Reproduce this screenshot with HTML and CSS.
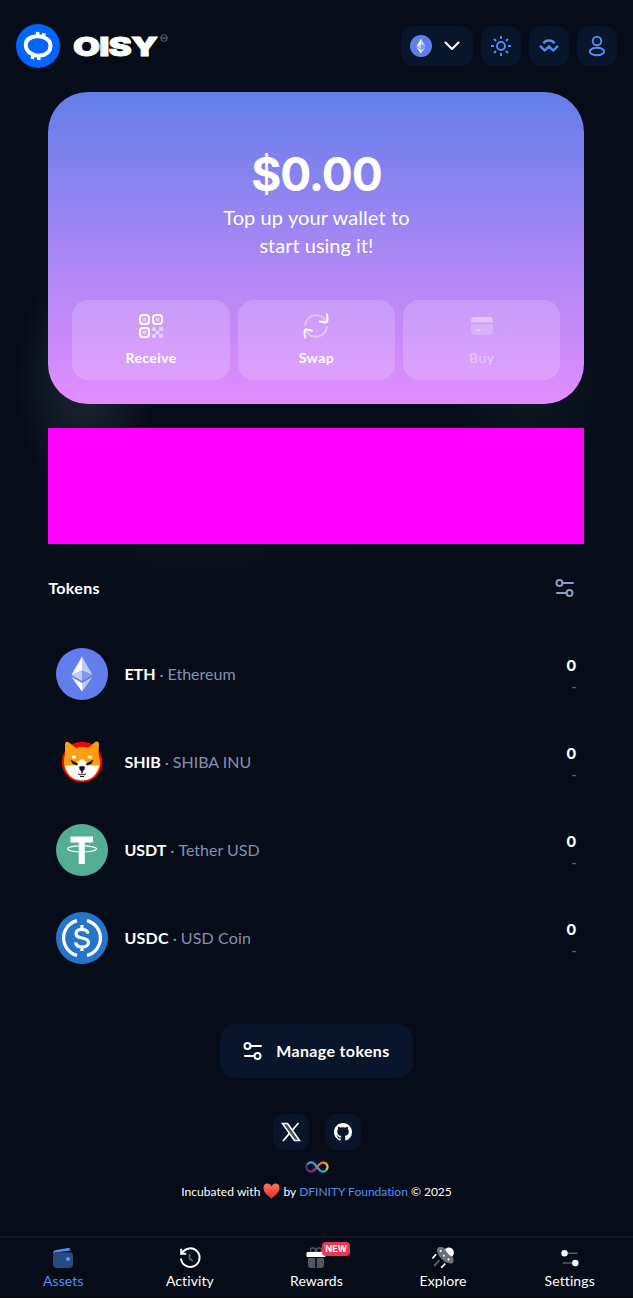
FILE: index.html
```html
<!DOCTYPE html>
<html lang="en">
<head>
<meta charset="utf-8">
<title>OISY Wallet</title>
<link rel="stylesheet" href="styles.css">
</head>
<body>
<svg class="defs" width="0" height="0">
  <defs>
    <symbol id="eth" viewBox="0 0 52 52">
      <circle cx="26" cy="26" r="26" fill="#627eea"/>
      <path d="M26 8.500V22.500L36.500 27Z" fill="#c0cbf7"/>
      <path d="M26 8.500 15.500 27 26 22.500Z" fill="#fff"/>
      <path d="M26 22.500 15.500 27 26 33Z" fill="#c0cbf7"/>
      <path d="M26 22.500 36.500 27 26 33Z" fill="#8198ee"/>
      <path d="M15.500 29 26 35V43.500Z" fill="#fff"/>
      <path d="M36.500 29 26 35V43.500Z" fill="#c0cbf7"/>
    </symbol>
    <symbol id="sliders" viewBox="0 0 20 20">
      <g fill="none" stroke="currentColor" stroke-width="2">
        <circle cx="4.500" cy="5" r="3"/><path d="M7.500 5H18" stroke-linecap="round"/>
        <circle cx="14.500" cy="15" r="3"/><path d="M2 15H11.500" stroke-linecap="round"/>
      </g>
    </symbol>
  </defs>
</svg>
<div class="page">
  <header class="header">
    <div class="brand">
      <svg width="44" height="44" viewBox="0 0 44 44">
        <circle cx="22" cy="22" r="22" fill="#0066ff"/>
        <path d="M20.500 12.300C27 11.500 34.500 15.500 34.500 21.500 34.500 28 29.500 31.300 23.500 31.600 16.500 32 9.800 27.500 9.800 21 9.800 15.500 14 13 20.500 12.300Z" fill="none" stroke="#fff" stroke-width="4"/>
        <path d="M21.800 8 21.300 12M28.200 9.200 27 13.500M17.300 30.500 16.200 35M23 31.500 22.600 36" stroke="#fff" stroke-width="3.600"/>
      </svg>
      <span class="wordmark"><span class="wordmark-text">OISY</span></span>
      <svg class="mark" width="8" height="8" viewBox="0 0 8 8" fill="none" stroke="#8a909b" stroke-width=".6"><circle cx="4" cy="4" r="3.400"/><path d="M4 4C2 2 1.500 3 1.500 4S2 6 4 4 6.500 3 6.500 4 6 6 4 4Z"/></svg>
    </div>
    <div class="tools">
      <button class="tool network">
        <svg width="22" height="22"><use href="#eth"/></svg>
        <svg width="16" height="10" viewBox="0 0 16 10" fill="none" stroke="#fff" stroke-width="2" stroke-linecap="round" stroke-linejoin="round"><path d="M1.500 1.500 8 8 14.500 1.500"/></svg>
      </button>
      <button class="tool">
        <svg width="22" height="22" viewBox="0 0 22 22" fill="none" stroke="#4f8ff5" stroke-width="1.900"><circle cx="11" cy="11" r="4"/><path d="M11 1V4M11 18V21M1 11H4M18 11H21M4 4 6 6M16 16 18 18M18 4 16 6M6 16 4 18"/></svg>
      </button>
      <button class="tool">
        <svg width="22" height="22" viewBox="0 0 22 22" fill="none" stroke="#4f8ff5" stroke-width="2.400" stroke-linejoin="round"><path d="M5.300 8.300C8.500 4.500 13.500 4.500 16.700 8.300M2 10.800 6.700 15.500 11 11.300 15.300 15.500 20 10.800"/></svg>
      </button>
      <button class="tool">
        <svg width="22" height="22" viewBox="0 0 22 22" fill="none" stroke="#4f8ff5" stroke-width="1.900"><circle cx="11" cy="6" r="4.300"/><ellipse cx="11" cy="16.500" rx="7.200" ry="3.800"/></svg>
      </button>
    </div>
  </header>

  <main class="main">
    <section class="hero">
      <div class="balance">$0.00</div>
      <p class="hint"><span class="hint-one">Top up your wallet to</span><br><span>start using it!</span></p>
      <div class="actions">
        <button class="action">
          <svg width="26" height="26" viewBox="0 0 26 26">
            <g fill="none" stroke="#fff" stroke-width="2"><rect x="2" y="2" width="9" height="9" rx="3"/><rect x="15" y="2" width="9" height="9" rx="3"/><rect x="2" y="15" width="9" height="9" rx="3"/></g>
            <g fill="#fff" opacity=".5"><rect x="4.500" y="4.500" width="4" height="4" rx="1"/><rect x="17.500" y="4.500" width="4" height="4" rx="1"/><rect x="4.500" y="17.500" width="4" height="4" rx="1"/><rect x="14" y="14" width="4" height="4" rx="1"/><rect x="21" y="14" width="4" height="4" rx="1"/><rect x="17.500" y="17.500" width="4" height="4" rx="1"/><rect x="14" y="21" width="4" height="4" rx="1"/><rect x="21" y="21" width="4" height="4" rx="1"/></g>
          </svg>
          <span class="receive">Receive</span>
        </button>
        <button class="action">
          <svg width="26" height="26" viewBox="0 0 26 26" fill="none" stroke="#fff" stroke-width="2" stroke-linecap="round" stroke-linejoin="round">
            <g opacity=".4"><path d="M2.200 12A11 11 0 0 1 22.500 7.500"/><path d="M23.800 14A11 11 0 0 1 4 19"/></g>
            <path d="M24 1.500 24.500 6.500C24.500 8.500 23.500 9.500 22 9.400L17 8.500M2 24.500 1.500 19.500C1.500 17 2.500 16.300 4 16.500L9 17.800"/>
          </svg>
          <span class="swap">Swap</span>
        </button>
        <button class="action off">
          <svg width="26" height="26" viewBox="0 0 26 26"><path d="M2 9.500V8Q2 4 6 4H20Q24 4 24 8V9.500Z" fill="#fff" opacity=".42"/><path d="M2 11H24V18Q24 22 20 22H6Q2 22 2 18Z" fill="#fff" opacity=".2"/><path d="M7 17H11.500" stroke="#fff" stroke-opacity=".5" stroke-width="1.500"/></svg>
          <span class="buy">Buy</span>
        </button>
      </div>
    </section>

    <div class="banner"></div>

    <div class="list-head">
      <h2>Tokens</h2>
      <svg class="filter" width="20" height="20"><use href="#sliders"/></svg>
    </div>

    <div class="row">
      <svg width="52" height="52"><use href="#eth"/></svg>
      <div class="name"><b>ETH</b><i>·</i><span>Ethereum</span></div>
      <div class="amount"><b>0</b><span class="dash">-</span></div>
    </div>
    <div class="row">
      <svg width="52" height="52" viewBox="0 0 52 52">
        <circle cx="26" cy="26" r="20.300" fill="#f00500"/>
        <path d="M9 18 9 8.500C9 5.500 11 5 13 6.500L20 12Q26 9.500 32 12L38.500 6.500C41 4.800 43 5.500 43 8.500L42.500 18C45 27 44.500 30 43 33 39 42 33 44 26 44S13 42 9 33C7.500 29 7.500 24 9 18Z" fill="#ff9f0f"/>
        <path d="M9 30C13 28.500 18 31 20.500 28 22 25 24 23.500 26 23.500S30 25 31.500 28C34 31 39 28.500 43 30 41 38.500 35 44.500 26 44.500S11 38.500 9 30Z" fill="#fff"/>
        <ellipse cx="18" cy="21" rx="2.300" ry="1.500" fill="#fff"/><ellipse cx="34" cy="21" rx="2.300" ry="1.500" fill="#fff"/>
        <path d="M15 24 22 28 20.500 29.200 16.500 27.500ZM37 24 30 28 31.500 29.200 35.500 27.500ZM23.300 31Q26 29.500 28.700 31 28.700 34 26.500 35V37H25.500V35Q23.300 34 23.300 31Z" fill="#161616" stroke="#161616" stroke-width=".5"/>
        <path d="M22 37.500 24 39 26 38 28 39 30 37.500M24 40.500H28" stroke="#161616" fill="none"/>
      </svg>
      <div class="name"><b>SHIB</b><i>·</i><span>SHIBA INU</span></div>
      <div class="amount"><b>0</b><span class="dash">-</span></div>
    </div>
    <div class="row">
      <svg width="52" height="52" viewBox="0 0 52 52"><circle cx="26" cy="26" r="26" fill="#53ae94"/><path d="M14.500 12.500H37V18.500H28.800V40H22.700V18.500H14.500Z" fill="#fff"/><path d="M22.500 21.800C15 22.300 11.500 23.300 11.500 24.800S17.500 28 26 28 40.500 26.300 40.500 24.800 36 22.300 29 21.800" fill="none" stroke="#fff" stroke-width="1.200"/></svg>
      <div class="name"><b>USDT</b><i>·</i><span>Tether USD</span></div>
      <div class="amount"><b>0</b><span class="dash">-</span></div>
    </div>
    <div class="row">
      <svg width="52" height="52" viewBox="0 0 52 52"><circle cx="26" cy="26" r="26" fill="#2775ca"/><g fill="none" stroke="#fff" stroke-width="3.200"><path d="M21 8.600A18 18 0 0 0 21 43.400M31 8.600A18 18 0 0 1 31 43.400"/><path d="M32 21.500C31.500 18 29 17.500 26 17.500 22.500 17.500 20 19 20 21.500 20 24.500 22 25.300 26 26S32.500 27.500 32.500 30.800C32.500 33.500 29.500 35 26 35 22.500 35 20 33.800 19.500 30.500M26 13V17.500M26 35V39"/></g></svg>
      <div class="name"><b class="usdc">USDC</b><i>·</i><span class="coin">USD Coin</span></div>
      <div class="amount"><b>0</b><span class="dash">-</span></div>
    </div>

    <button class="manage"><svg width="20" height="20"><use href="#sliders"/></svg><span>Manage tokens</span></button>
  </main>

  <footer class="footer">
    <div class="socials">
      <a class="social"><svg width="20" height="20" viewBox="0 0 20 20"><path d="M1.500 1.500H6.500L18.500 18.500H13.500Z" fill="none" stroke="#fff" stroke-width="1.600"/><path d="M3 1.500H6L17 18.500H14Z" fill="#fff" opacity=".25"/><path d="M17.500 1 11 8.500M8.700 11.200 2 19" stroke="#fff" stroke-width="1.800"/></svg></a>
      <a class="social"><svg width="18" height="18" viewBox="0 0 16 16" fill="#fff"><path d="M8 0C3.580 0 0 3.580 0 8c0 3.540 2.290 6.530 5.470 7.590.4.070.55-.17.55-.38 0-.19-.01-.82-.01-1.490-2.010.37-2.530-.49-2.690-.94-.09-.23-.48-.94-.82-1.130-.28-.15-.68-.52-.01-.53.63-.01 1.080.58 1.230.82.72 1.210 1.870.87 2.330.66.07-.52.28-.87.51-1.070-1.780-.2-3.640-.89-3.640-3.950 0-.87.31-1.590.82-2.150-.08-.2-.36-1.020.08-2.120 0 0 .67-.21 2.200.82.64-.18 1.320-.27 2-.27s1.360.09 2 .27c1.530-1.040 2.200-.82 2.200-.82.44 1.100.16 1.920.08 2.120.51.56.82 1.270.82 2.150 0 3.070-1.870 3.750-3.650 3.950.29.25.54.73.54 1.480 0 1.070-.01 1.930-.01 2.200 0 .21.15.46.55.38A8 8 0 0 0 16 8c0-4.420-3.580-8-8-8Z"/></svg></a>
    </div>
    <svg class="infinity" width="24" height="12" viewBox="0 0 24 12" fill="none" stroke-width="2.200" stroke-linecap="round">
      <defs><linearGradient id="ia"><stop stop-color="#522785"/><stop offset="1" stop-color="#ed1e79"/></linearGradient><linearGradient id="ib"><stop stop-color="#f15a24"/><stop offset="1" stop-color="#fbb03b"/></linearGradient></defs>
      <path d="M12 6C10 8.500 8.500 10.500 6 10.500A4.500 4.500 0 0 1 2.200 3.500" stroke="url(#ia)"/>
      <path d="M12 6C14 3.500 15.500 1.500 18 1.500A4.500 4.500 0 0 1 21.500 8.800" stroke="url(#ib)"/>
      <path d="M3 2.700C5 .8 7.800 1.200 9.500 3L14.500 9C16.500 11 19 11 20.800 9.500" stroke="#29abe2"/>
    </svg>
    <p class="credit"><span class="with">Incubated with</span><svg width="17" height="16" viewBox="0 0 17 16"><defs><linearGradient id="heart" x2="0" y2="1"><stop stop-color="#ff755c"/><stop offset="1" stop-color="#ef292b"/></linearGradient></defs><path d="M8.500 15.500C5 12.500.5 9.500.5 5.200.5 1.500 2.700.5 4.500.5 6.500.5 8 2 8.500 3.500 9 2 10.500.5 12.500.5 14.300.5 16.500 1.500 16.500 5.200 16.500 9.500 12 12.500 8.500 15.500Z" fill="url(#heart)"/></svg><span>by</span><a>DFINITY Foundation</a><span>© 2025</span></p>
  </footer>

  <nav class="nav">
    <a class="tab active">
      <svg width="24" height="24" viewBox="0 0 24 24"><path d="M2 8Q2 4.500 5 4L17 2Q19.500 1.600 19.500 4.500L4 6.500Z" fill="#4f8ff5"/><rect x="2" y="6.200" width="20" height="15.800" rx="4" fill="#284a7f"/><circle cx="17" cy="13" r="2" fill="#5b9aff"/></svg>
      <span>Assets</span></a>
    <a class="tab">
      <svg width="24" height="24" viewBox="0 0 24 24" fill="none" stroke="#fff" stroke-width="2"><path d="M4.200 7A9.300 9.300 0 1 1 3 12.500M3.200 2.800V7.800H8.200"/><path d="M11.500 8V12.500L14.800 15" stroke-opacity=".38" stroke-width="1.700"/></svg>
      <span>Activity</span></a>
    <a class="tab rewards">
      <svg width="24" height="24" viewBox="0 0 24 24"><g fill="#53565f"><path d="M4 12H11.200V22H7Q4 22 4 19ZM12.800 12H20V19Q20 22 17 22H12.800Z"/></g><g fill="none" stroke="#53565f" stroke-width="1.400"><rect x="6.500" y="2" width="5" height="4.500" rx="2"/><rect x="12.500" y="2" width="5" height="4.500" rx="2"/></g><rect x="2.500" y="6" width="19" height="5" rx="1" fill="#fff"/></svg>
      <em class="badge">NEW</em>
      <span>Rewards</span></a>
    <a class="tab">
      <svg width="26" height="26" viewBox="0 0 26 26"><ellipse cx="15.500" cy="10" rx="11.500" ry="5.600" transform="rotate(45 15.500 10)" fill="#6d7078"/><path d="M15.300 3.500C18 .5 22 1.300 23.700 3.700 25.500 6.300 25 9 23 11.500 19 9.500 17 7 15.300 3.500Z" fill="#fff"/><g fill="#fff"><circle cx="10.500" cy="5.500" r="1.100"/><circle cx="14" cy="10.500" r="1.100"/><circle cx="19" cy="14.500" r="1.100"/></g><g stroke="#fff" stroke-width="1.800"><path d="M5.500 9 1.500 13.500M15.500 19 11 23.500"/><path d="M9 15.500 3.500 21.500" stroke-opacity=".4"/></g></svg>
      <span>Explore</span></a>
    <a class="tab">
      <svg width="24" height="24" viewBox="0 0 24 24"><path d="M9 7.200H19.500M4.500 17H14" stroke="#595c66" stroke-width="1.500"/><circle cx="6.500" cy="7.200" r="3.200" fill="#fff"/><circle cx="17.300" cy="17" r="3.200" fill="#fff"/></svg>
      <span>Settings</span></a>
  </nav>
</div>
</body>
</html>
```
FILE: styles.css
```css
* { box-sizing: border-box; }
body { margin: 0; background: #060d19; color: #fff; font-family: Lato, "Open Sans", sans-serif; font-variant-ligatures: none; }
svg { display: block; flex: none; }
button { border: 0; padding: 0; margin: 0; color: inherit; font-family: inherit; }
.defs { position: absolute; }
.page {
  width: 633px; height: 1298px; overflow: hidden; display: flex; flex-direction: column;
  background:
    radial-gradient(ellipse 70px 125px at 85px 380px, rgba(50, 57, 73, .55), rgba(50, 57, 73, 0)),
    radial-gradient(ellipse 80px 110px at 530px 380px, rgba(22, 36, 42, .55), rgba(22, 36, 42, 0)),
    radial-gradient(ellipse 220px 65px at 200px 550px, rgba(18, 25, 35, .4), rgba(18, 25, 35, 0)),
    #060d19;
}
.header { height: 92px; padding: 24px 16px; display: flex; justify-content: space-between; }
.brand { display: flex; }
.wordmark { width: 86px; height: 44px; margin-left: 13px; }
.wordmark-text { display: inline-block; font: 900 25.5px/45px Inter, sans-serif; letter-spacing: -.6px; transform: scaleX(1.37); transform-origin: 0 50%; -webkit-text-stroke: .8px #fff; }
.mark { margin: 10px 0 0 1px; }
.tools { display: flex; gap: 8px; padding-top: 2px; }
.tool { width: 40px; height: 40px; border-radius: 12px; background: #08162b; display: flex; align-items: center; justify-content: center; }
.network { width: 72px; gap: 12px; padding-right: 4px; }
.main { width: 536px; margin: 0 auto 0 48.4px; display: flex; flex-direction: column; align-items: stretch; }
.hero { height: 312px; border-radius: 40px; padding: 54px 24px 24px; background: linear-gradient(180deg, #637eea 0%, #b088f5 58%, #e28dff 100%); text-align: center; display: flex; flex-direction: column; }
.balance { font: 700 46px/56px Inter, sans-serif; height: 58px; letter-spacing: -1.1px; white-space: nowrap; }
.hint { margin: 0; font-size: 20px; line-height: 28px; position: relative; top: -1px; }
.hint-one { letter-spacing: .1px; }
.actions { margin-top: auto; display: grid; grid-template-columns: repeat(3, 1fr); gap: 8px; }
.action { height: 80px; border-radius: 16px; background: rgba(255, 255, 255, .17); display: flex; flex-direction: column; align-items: center; padding-top: 13px; gap: 9px; font-weight: 700; font-size: 14px; line-height: 20px; }
.receive { letter-spacing: .4px; }
.swap, .buy { letter-spacing: .4px; }
.off span { opacity: .35; }
.banner { height: 116px; margin-top: 24px; background: #f0f; }
.list-head { height: 88px; display: flex; align-items: center; justify-content: space-between; padding-right: 9px; }
h2 { margin: 0; font-size: 16px; line-height: 24px; letter-spacing: .3px; }
.filter { color: #8a9cc4; }
.row { height: 88px; padding: 0 8px; display: flex; align-items: center; position: relative; top: -2px; }
.name { margin-left: 16px; display: flex; font-size: 16px; line-height: 24px; color: #8291b3; white-space: nowrap; }
.name b { color: #fff; }
.name i { font-style: normal; width: 12px; text-align: center; }
.usdc { letter-spacing: .25px; }
.coin { letter-spacing: .15px; }
.amount { margin-left: auto; display: flex; flex-direction: column; align-items: flex-end; color: #56617a; font-size: 14px; line-height: 20px; padding-top: 2px; }
.amount b { color: #fff; font: 700 15px/23px Inter, sans-serif; }
.dash { font-weight: 700; }
.manage { width: 193px; height: 54px; margin: 40px auto 0; border-radius: 16px; background: #08162b; display: flex; align-items: center; justify-content: center; gap: 13px; font-size: 16px; font-weight: 700; line-height: 24px; letter-spacing: .35px; }
.footer { display: flex; flex-direction: column; align-items: center; padding-top: 36px; }
.socials { display: flex; gap: 16px; }
.social { width: 36px; height: 36px; border-radius: 11px; background: #08162b; display: flex; align-items: center; justify-content: center; }
.infinity { margin-top: 11px; }
.credit { margin: 9px 0 0; display: flex; gap: 3px; align-items: center; font-size: 12px; line-height: 20px; white-space: nowrap; }
.credit svg { margin-top: -3px; }
.with { letter-spacing: .05px; }
.credit a { color: #4f8ff5; }
.nav { margin-top: auto; height: 62px; border-top: 2px solid #111927; border-bottom: 1px solid #02060c; display: grid; grid-template-columns: repeat(5, 1fr); background: #060d19; }
.tab { display: flex; flex-direction: column; align-items: center; padding-top: 8px; font-size: 14px; line-height: 20px; letter-spacing: .1px; position: relative; }
.tab svg { height: 24px; margin-bottom: 1px; }
.active { color: #4f8ff5; }
.badge { position: absolute; left: 69px; top: 4px; width: 28px; height: 14px; border-radius: 4px; background: #ef364f; font: 700 9px/14px Inter, sans-serif; text-align: center; }
```
